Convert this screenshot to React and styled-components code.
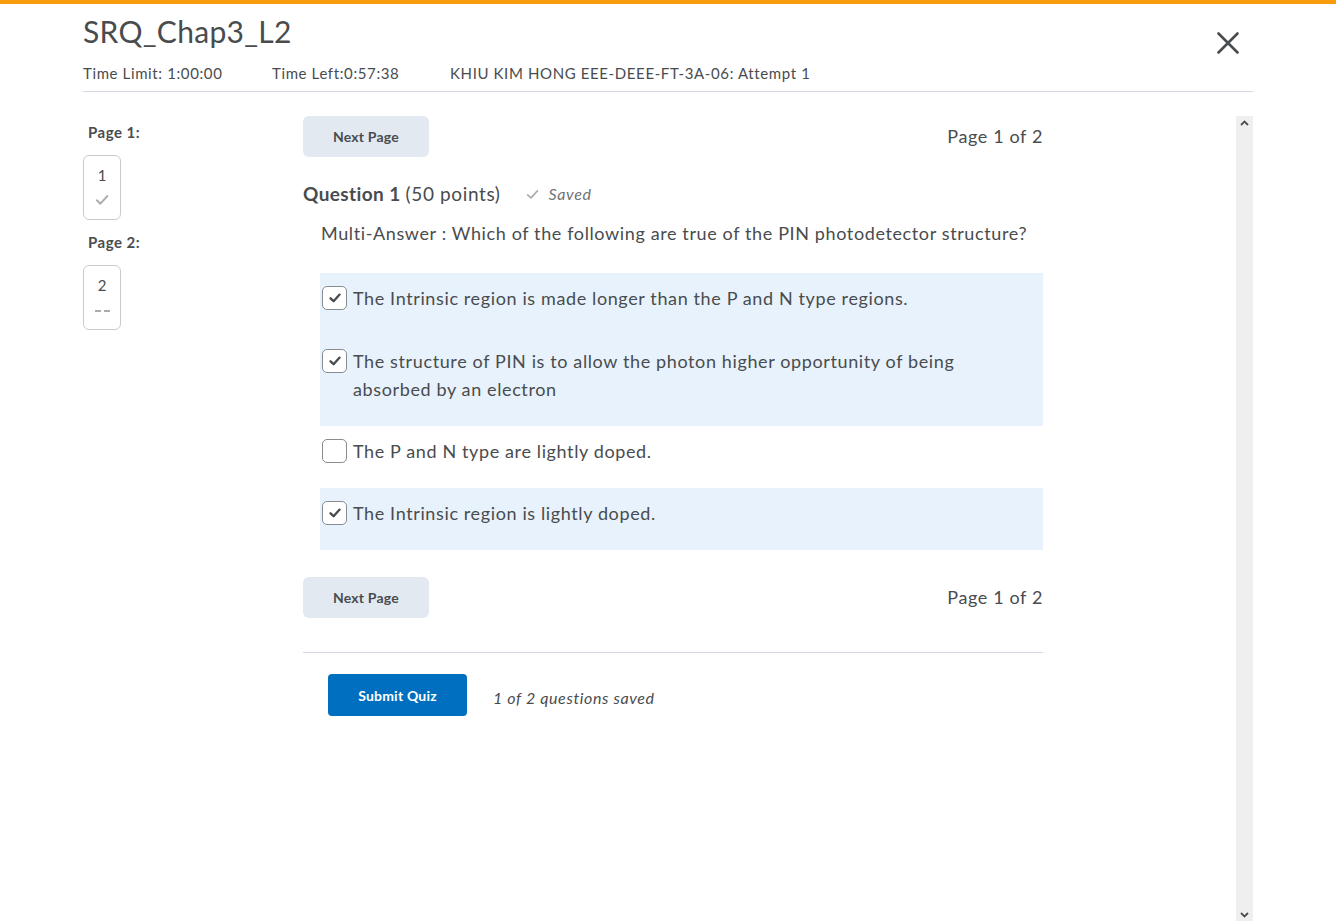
import React from "react";
import styled, { createGlobalStyle } from "styled-components";

const Global = createGlobalStyle`
  html, body { margin: 0; padding: 0; overflow: hidden; background: #fff; }
  body { font-family: Lato, "Open Sans", Arial, sans-serif; color: #494c4e; letter-spacing: 0.62px; }
  * { box-sizing: border-box; }
`;

const TopBar = styled.div`
  height: 4px;
  background: #f89c0e;
`;

const Page = styled.div`
  padding: 0 83px;
  height: calc(100vh - 4px);
  display: flex;
  flex-direction: column;
`;

const Header = styled.header`
  display: flex;
  justify-content: space-between;
  align-items: flex-start;
  border-bottom: 1px solid #d3d9e3;
  padding-bottom: 8px;
`;

const HeaderText = styled.div`
  display: flex;
  flex-direction: column;
`;

const Title = styled.h1`
  margin: 9px 0 0;
  font-size: 30px;
  font-weight: 400;
  letter-spacing: 0.3px;
  line-height: 36px;
  color: #494c4e;
`;

const MetaRow = styled.div`
  display: flex;
  margin-top: 14px;
  font-size: 15px;
  line-height: 20px;
  color: #494c4e;
`;

const Meta = styled.span`
  width: ${(p) => p.$w || "auto"};
`;

const CloseBtn = styled.button`
  margin: 27px 13px 0 0;
  background: none;
  border: 0;
  padding: 0;
  width: 24px;
  height: 24px;
  cursor: pointer;
`;

const Body = styled.div`
  flex: 1;
  display: flex;
  margin-top: 24px;
  min-height: 0;
`;

const Nav = styled.nav`
  width: 220px;
  flex-shrink: 0;
  display: flex;
  flex-direction: column;
`;

const NavLabel = styled.div`
  font-size: 15px;
  font-weight: 700;
  letter-spacing: 0.5px;
  line-height: 20px;
  padding-left: 5px;
  margin-top: ${(p) => p.$mt || "6px"};
`;

const NavBox = styled.div`
  margin-top: 13px;
  width: 38px;
  height: 65px;
  border: 1px solid #c8cbce;
  border-radius: 6px;
  display: flex;
  flex-direction: column;
  align-items: center;
  padding-top: 9px;
  font-size: 15px;
  line-height: 20px;
  letter-spacing: 0;
`;

const NavStatus = styled.div`
  margin-top: 7px;
  height: 16px;
  display: flex;
  align-items: center;
  gap: 3px;
`;

const Dash = styled.span`
  width: 6px;
  height: 1.5px;
  background: #a9adb0;
  margin-top: 2px;
`;

const Main = styled.main`
  width: 740px;
  flex-shrink: 0;
  display: flex;
  flex-direction: column;
`;

const Spacer = styled.div`
  flex: 1;
`;

const NavRow = styled.div`
  display: flex;
  justify-content: space-between;
  align-items: center;
  margin-top: ${(p) => p.$mt || "0"};
`;

const GrayButton = styled.button`
  width: 126px;
  height: 41px;
  border: 0;
  border-radius: 6px;
  background: #e3e9f1;
  color: #494c4e;
  font-family: Lato, sans-serif;
  font-size: 14px;
  font-weight: 700;
  letter-spacing: 0.2px;
`;

const PageCount = styled.span`
  font-size: 18px;
  color: #494c4e;
  margin-top: -2px;
`;

const QHeader = styled.div`
  margin-top: 23px;
  display: flex;
  align-items: center;
  line-height: 28px;
  font-size: 19px;
`;

const QTitle = styled.strong`
  font-weight: 700;
  letter-spacing: 0.4px;
  margin-right: 5px;
`;

const Saved = styled.span`
  margin-left: 24px;
  display: inline-flex;
  align-items: center;
  gap: 9px;
  font-size: 16px;
  font-style: italic;
  color: #6e7376;
`;

const QText = styled.div`
  margin: 11px 0 0 18px;
  font-size: 18px;
  line-height: 28px;
`;

const Options = styled.div`
  margin: 26px 0 0 17px;
  display: flex;
  flex-direction: column;
`;

const Option = styled.label`
  display: flex;
  align-items: flex-start;
  gap: 6px;
  padding: ${(p) => (p.$first ? "11px 80px 24px 2px" : "11px 80px 23px 2px")};
  background: ${(p) => (p.$checked ? "#e8f2fc" : "transparent")};
  font-size: 18px;
  line-height: 28px;
`;

const Box = styled.span`
  flex-shrink: 0;
  margin-top: 2px;
  width: 25px;
  height: 24px;
  border: 1px solid #868c8f;
  border-radius: 5px;
  background: #fff;
  display: flex;
  align-items: center;
  justify-content: center;
`;

const Divider = styled.hr`
  margin: 34px 0 0;
  border: 0;
  border-top: 1px solid #d3d9e3;
`;

const SubmitRow = styled.div`
  margin: 21px 0 0 25px;
  display: flex;
  align-items: center;
  gap: 26px;
`;

const SubmitButton = styled.button`
  width: 139px;
  height: 42px;
  border: 0;
  border-radius: 4px;
  background: #006fbf;
  color: #fff;
  font-family: Lato, sans-serif;
  font-size: 14px;
  font-weight: 700;
  letter-spacing: 0.2px;
`;

const SavedCount = styled.span`
  font-size: 16px;
  font-style: italic;
  color: #494c4e;
  margin-top: 4px;
`;

const Scrollbar = styled.div`
  width: 17px;
  flex-shrink: 0;
  background: #efefef;
  display: flex;
  flex-direction: column;
  justify-content: space-between;
  align-items: center;
  padding: 4px 0 3px;
`;

const Check = ({ color = "#494c4e", size = 14, w = 2.2 }) => (
  <svg width={size} height={size} viewBox="0 0 14 14" fill="none">
    <path d="M2.5 7.3 L5.6 10.2 L11.6 3.6" stroke={color} strokeWidth={w} strokeLinecap="round" strokeLinejoin="round" />
  </svg>
);

const Chevron = ({ up }) => (
  <svg width="9" height="6" viewBox="0 0 9 6">
    <path d={up ? "M1 5 L4.5 1.5 L8 5" : "M1 1 L4.5 4.5 L8 1"} stroke="#505050" strokeWidth="1.8" fill="none" />
  </svg>
);

const options = [
  { text: "The Intrinsic region is made longer than the P and N type regions.", checked: true },
  { text: "The structure of PIN is to allow the photon higher opportunity of being absorbed by an electron", checked: true },
  { text: "The P and N type are lightly doped.", checked: false },
  { text: "The Intrinsic region is lightly doped.", checked: true },
];

export default function App() {
  return (
    <>
      <Global />
      <TopBar />
      <Page>
        <Header>
          <HeaderText>
            <Title>SRQ_Chap3_L2</Title>
            <MetaRow>
              <Meta $w="189px">Time Limit: 1:00:00</Meta>
              <Meta $w="178px">Time Left:0:57:38</Meta>
              <Meta>KHIU KIM HONG EEE-DEEE-FT-3A-06: Attempt 1</Meta>
            </MetaRow>
          </HeaderText>
          <CloseBtn aria-label="Close">
            <svg width="24" height="24" viewBox="0 0 24 24">
              <path d="M2.5 2.5 L21.5 21.5 M21.5 2.5 L2.5 21.5" stroke="#494c4e" strokeWidth="2.6" strokeLinecap="round" />
            </svg>
          </CloseBtn>
        </Header>
        <Body>
          <Nav>
            <NavLabel>Page 1:</NavLabel>
            <NavBox>
              1
              <NavStatus>
                <Check color="#a9adb0" size={16} w={1.8} />
              </NavStatus>
            </NavBox>
            <NavLabel $mt="12px">Page 2:</NavLabel>
            <NavBox>
              2
              <NavStatus>
                <Dash />
                <Dash />
              </NavStatus>
            </NavBox>
          </Nav>
          <Main>
            <NavRow>
              <GrayButton>Next Page</GrayButton>
              <PageCount>Page 1 of 2</PageCount>
            </NavRow>
            <QHeader>
              <QTitle>Question 1</QTitle> (50 points)
              <Saved>
                <Check color="#a9adb0" size={15} w={1.6} />
                Saved
              </Saved>
            </QHeader>
            <QText>
              Multi-Answer : Which of the following are true of the PIN photodetector structure?
            </QText>
            <Options>
              {options.map((o, i) => (
                <Option key={i} $checked={o.checked} $first={i === 0}>
                  <Box>{o.checked && <Check size={14} w={2.3} />}</Box>
                  <span>{o.text}</span>
                </Option>
              ))}
            </Options>
            <NavRow $mt="27px">
              <GrayButton>Next Page</GrayButton>
              <PageCount>Page 1 of 2</PageCount>
            </NavRow>
            <Divider />
            <SubmitRow>
              <SubmitButton>Submit Quiz</SubmitButton>
              <SavedCount>1 of 2 questions saved</SavedCount>
            </SubmitRow>
          </Main>
          <Spacer />
          <Scrollbar>
            <Chevron up />
            <Chevron />
          </Scrollbar>
        </Body>
      </Page>
    </>
  );
}
